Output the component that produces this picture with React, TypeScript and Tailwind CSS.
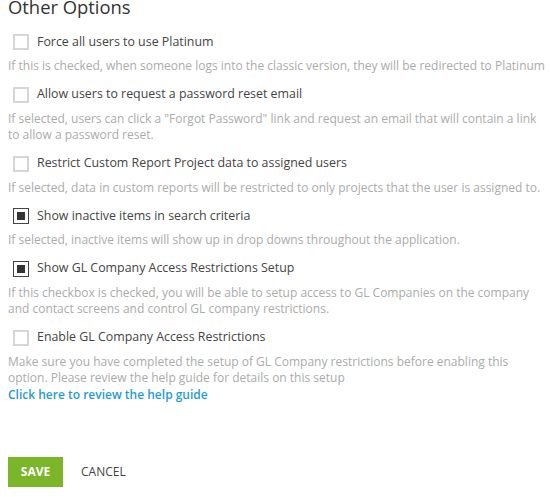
const options = [
  {
    label: "Force all users to use Platinum",
    info: "If this is checked, when someone logs into the classic version, they will be redirected to Platinum",
    checked: false,
  },
  {
    label: "Allow users to request a password reset email",
    info: 'If selected, users can click a "Forgot Password" link and request an email that will contain a link to allow a password reset.',
    checked: false,
  },
  {
    label: "Restrict Custom Report Project data to assigned users",
    info: "If selected, data in custom reports will be restricted to only projects that the user is assigned to.",
    checked: false,
  },
  {
    label: "Show inactive items in search criteria",
    info: "If selected, inactive items will show up in drop downs throughout the application.",
    checked: true,
  },
  {
    label: "Show GL Company Access Restrictions Setup",
    info: "If this checkbox is checked, you will be able to setup access to GL Companies on the company and contact screens and control GL company restrictions.",
    checked: true,
  },
];

function Checkbox({ checked }: { checked: boolean }) {
  if (checked) {
    return (
      <span className="w-4 h-4 border border-[#444] bg-white flex items-center justify-center shrink-0">
        <span className="w-2 h-2 bg-[#333]" />
      </span>
    );
  }
  return <span className="w-4 h-4 border-2 border-[#d6d6d6] bg-white shrink-0" />;
}

function OptionRow({
  label,
  info,
  checked,
  children,
}: {
  label: string;
  info: string;
  checked: boolean;
  children?: React.ReactNode;
}) {
  return (
    <div className="flex flex-col mb-[10px]">
      <label className="flex items-center gap-2 h-5 pl-[5px] text-[12.4px] text-[#444]">
        <Checkbox checked={checked} />
        {label}
      </label>
      <p className="mt-[6px] text-[12px] leading-[16.5px] text-[#ababab]">{info}</p>
      {children}
    </div>
  );
}

export default function App() {
  return (
    <div
      className="w-[551px] h-[497px] overflow-hidden bg-white pl-2 pr-[3px]"
      style={{ fontFamily: '"Open Sans", sans-serif' }}
    >
      <h2 className="-mt-[6px] mb-[12px] text-[18.4px] leading-[26px] text-[#333]">Other Options</h2>
      {options.map((o) => (
        <OptionRow key={o.label} {...o} />
      ))}
      <OptionRow
        label="Enable GL Company Access Restrictions"
        info="Make sure you have completed the setup of GL Company restrictions before enabling this option. Please review the help guide for details on this setup"
        checked={false}
      >
        <a className="text-[12px] leading-[16px] font-semibold text-[#1f9bd7] cursor-pointer">
          Click here to review the help guide
        </a>
      </OptionRow>
      <div className="flex items-center gap-[18px] mt-[54px]">
        <button className="h-[30px] w-[55px] bg-[#7ab52a] text-white text-[12px] font-bold">
          SAVE
        </button>
        <button className="text-[12px] text-[#444]">CANCEL</button>
      </div>
    </div>
  );
}
